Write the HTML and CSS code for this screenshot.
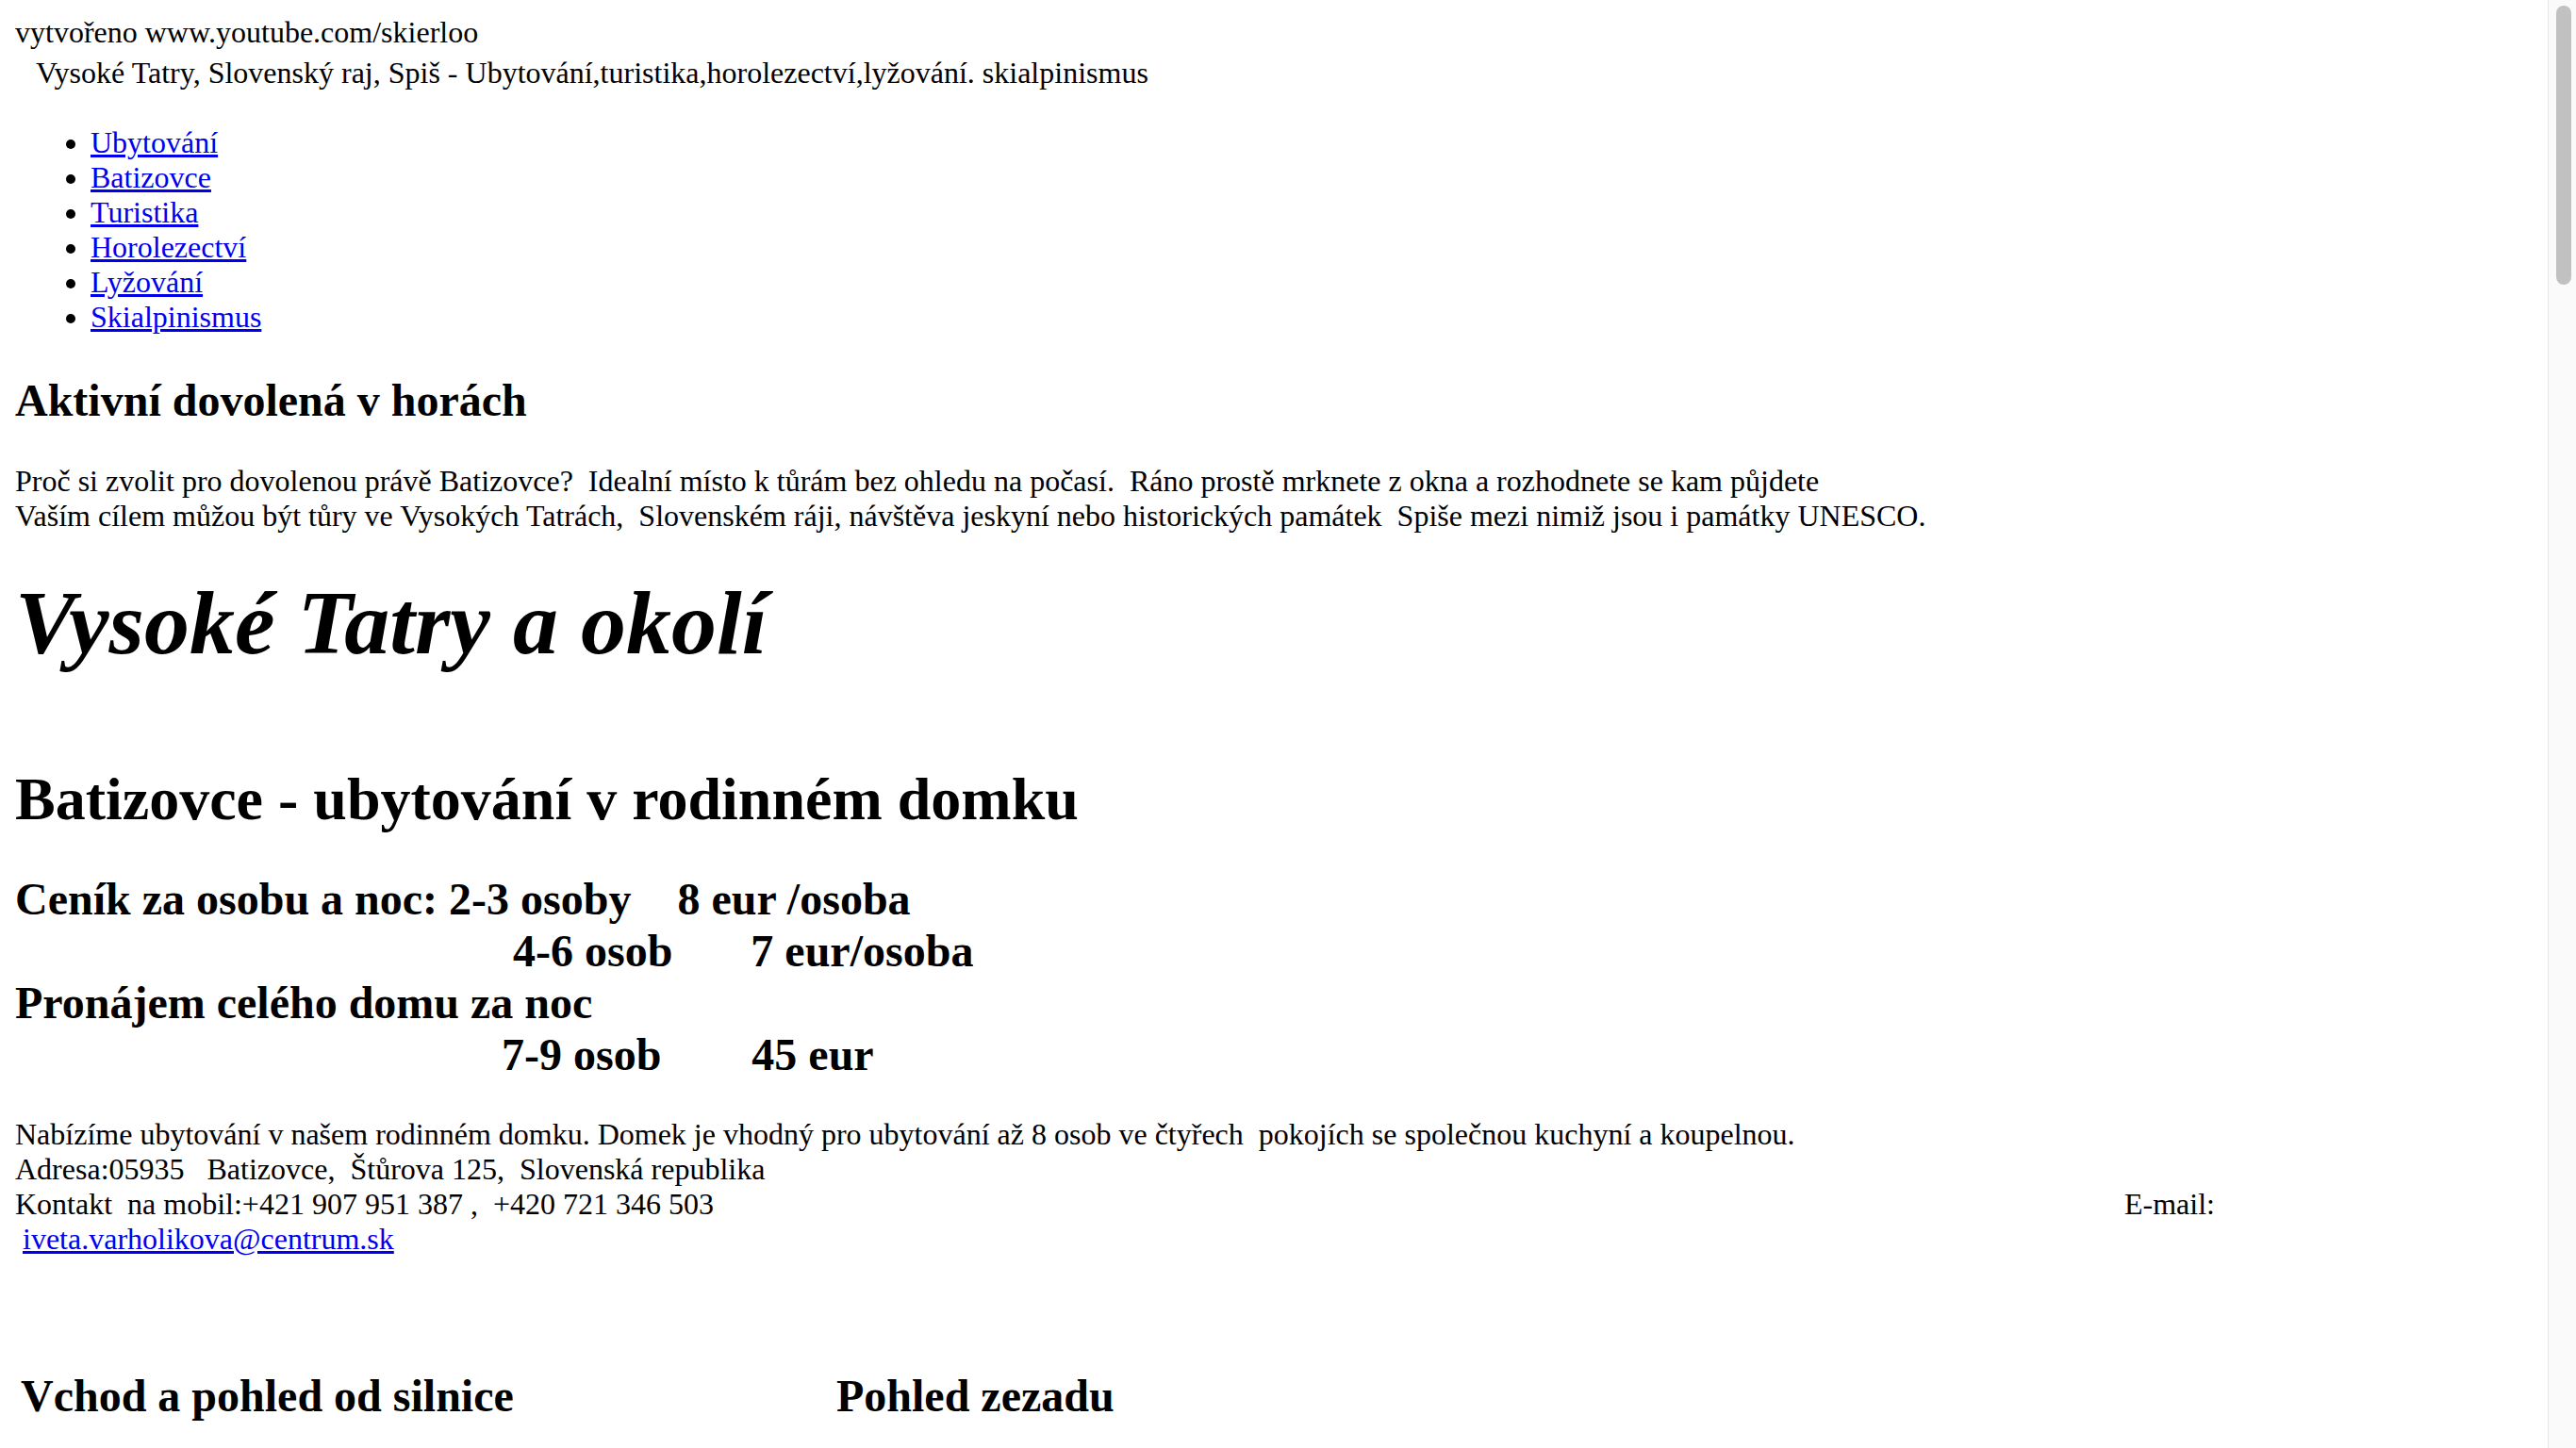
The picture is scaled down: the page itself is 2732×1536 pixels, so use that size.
FILE: index.html
```html
<!DOCTYPE html>
<html lang="cs">
<head>
<meta charset="utf-8">
<title>Batizovce - ubytování</title>
<link rel="stylesheet" href="styles.css">
</head>
<body>
<div class="credit">vytvořeno www.youtube.com/skierloo</div>
<div class="tagline">Vysoké Tatry, Slovenský raj, Spiš - Ubytování,turistika,horolezectví,lyžování. skialpinismus</div>
<ul class="nav">
  <li><a href="#">Ubytování</a></li>
  <li><a href="#">Batizovce</a></li>
  <li><a href="#">Turistika</a></li>
  <li><a href="#">Horolezectví</a></li>
  <li><a href="#">Lyžování</a></li>
  <li><a href="#">Skialpinismus</a></li>
</ul>
<h2 class="intro-title">Aktivní dovolená v horách</h2>
<p class="intro">Proč si zvolit pro dovolenou právě Batizovce?&nbsp; Idealní místo k tůrám bez ohledu na počasí.&nbsp; Ráno prostě mrknete z okna a rozhodnete se kam půjdete<br>Vaším cílem můžou být tůry ve Vysokých Tatrách,&nbsp; Slovenském ráji, návštěva jeskyní nebo historických památek&nbsp; Spiše mezi nimiž jsou i památky UNESCO.</p>
<div class="big-title">Vysoké Tatry a okolí</div>
<h1 class="house-title">Batizovce - ubytování v rodinném domku</h1>
<div class="pricing">
  <div class="price-row">Ceník za osobu a noc: 2-3 osoby<span class="gap-a">8 eur /osoba</span></div>
  <div class="price-row"><span class="ind-b">4-6 osob</span><span class="gap-b">7 eur/osoba</span></div>
  <div class="price-row">Pronájem celého domu za noc</div>
  <div class="price-row"><span class="ind-c">7-9 osob</span><span class="gap-c">45 eur</span></div>
</div>
<p class="about">Nabízíme ubytování v našem rodinném domku. Domek je vhodný pro ubytování až 8 osob ve čtyřech&nbsp; pokojích se společnou kuchyní a koupelnou.<br>Adresa:05935&nbsp;&nbsp; Batizovce,&nbsp; Štůrova 125,&nbsp; Slovenská republika<br>Kontakt&nbsp; na mobil:+421 907 951 387 ,&nbsp; +420 721 346 503<span class="email-label">E-mail:</span></p>
<div class="email-line"><a href="#">iveta.varholikova@centrum.sk</a></div>
<div class="gallery">
  <div class="gallery-cell first">Vchod a pohled od silnice</div>
  <div class="gallery-cell second">Pohled zezadu</div>
</div>
<div class="scrollbar"><div class="scroll-thumb"></div></div>
</body>
</html>
```
FILE: styles.css
```css
html {
  overflow: hidden;
  background: #ffffff;
}
body {
  margin: 16px;
  font-family: "Liberation Serif", "Times New Roman", serif;
  font-size: 32px;
  color: #000000;
}
a {
  color: #0000ee;
}
.tagline {
  padding-left: 22px;
  margin-top: 6px;
}
.nav {
  margin: 37px 0 32px;
  padding-left: 80px;
}
.intro-title {
  font-size: 48px;
  margin: 42px 0 40px;
}
.intro {
  margin: 32px 0;
}
.big-title {
  font-size: 96px;
  font-weight: bold;
  font-style: italic;
  margin-top: 39px;
}
.house-title {
  font-size: 64px;
  margin: 95px 0 41px;
}
.pricing {
  font-size: 48px;
  font-weight: bold;
}
.gap-a {
  margin-left: 49px;
}
.ind-b {
  margin-left: 528px;
}
.gap-b {
  margin-left: 83px;
}
.ind-c {
  margin-left: 516px;
}
.gap-c {
  margin-left: 96px;
}
.about {
  margin: 39px 0 0;
}
.email-label {
  margin-left: 1496px;
}
.email-line {
  padding-left: 8px;
}
.gallery {
  display: flex;
  margin-top: 120px;
  font-size: 48px;
  font-weight: bold;
}
.gallery-cell.first {
  width: 865px;
  padding-left: 6px;
}
.scrollbar {
  position: fixed;
  top: 0;
  right: 0;
  width: 29px;
  height: 100%;
  background: #fafafa;
  border-left: 1px solid #e6e6e6;
}
.scroll-thumb {
  margin: 6px 0 0 8px;
  width: 16px;
  height: 296px;
  border-radius: 8px;
  background: #c1c1c1;
}
```
